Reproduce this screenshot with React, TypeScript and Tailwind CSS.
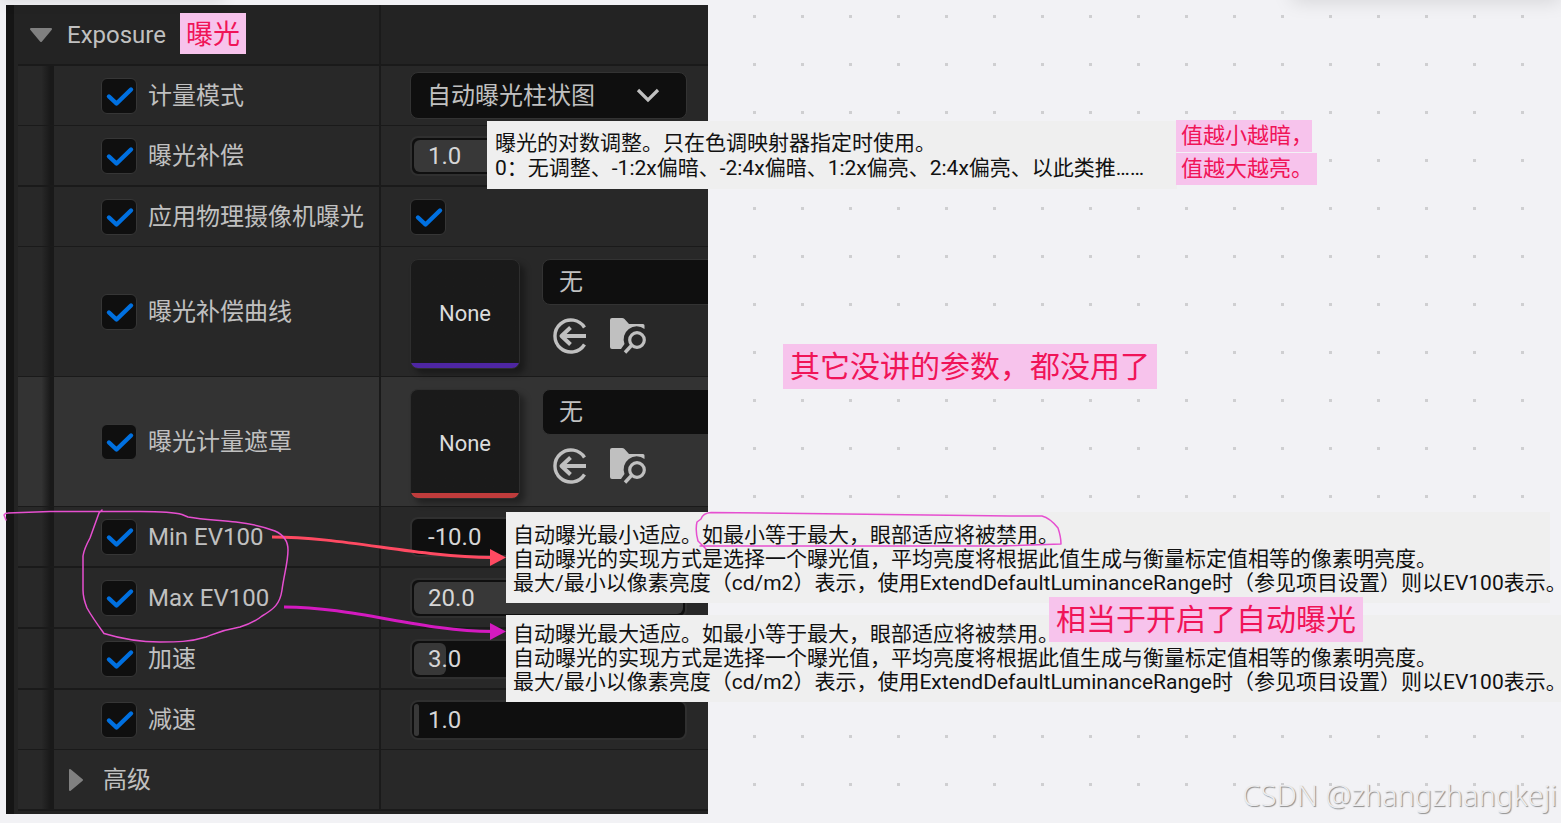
import React, { useState } from 'react';

type RowProps = {
  label: string;
  thin?: boolean;
  tall?: boolean;
  active?: boolean;
  children?: React.ReactNode;
};

function Check({ label }: { label: string }) {
  const [checked, setChecked] = useState<boolean>(true);

  return (
    <span className="relative block size-9 shrink-0">
      <input
        type="checkbox"
        aria-label={label}
        checked={checked}
        onChange={(e) => setChecked(e.target.checked)}
        className="block size-9 appearance-none rounded-md border border-[#363636] bg-[#0f0f0f]"
      />
      {checked && (
        <svg className="pointer-events-none absolute inset-0" width="36" height="36" fill="none">
          <path
            d="M8 18.5 15.5 25.5 30 11.5"
            stroke="#0070e0"
            strokeWidth="4.4"
            strokeLinecap="round"
            strokeLinejoin="round"
          />
        </svg>
      )}
    </span>
  );
}

function Gutter() {
  return (
    <div className="w-9 shrink-0 bg-linear-to-r from-transparent from-65% to-[#191919] to-90%" />
  );
}

function Row({ label, thin, tall, active, children }: RowProps) {
  return (
    <div
      className={`flex border-[#1a1a1a] ${thin || tall ? 'border-b' : 'border-b-2'} ${
        active ? 'bg-[#333333]' : 'bg-[#282828]'
      }`}
    >
      <Gutter />
      <div className="flex w-[327px] shrink-0 items-center gap-[11px] border-r-2 border-[#1a1a1a] pl-[47px]">
        <Check label={label} />
        <span className="whitespace-nowrap">{label}</span>
      </div>
      <div className={`flex flex-1 items-center pl-[29px] ${tall ? 'h-[129px] pt-1' : 'h-[59px]'}`}>
        {children}
      </div>
    </div>
  );
}

function NumberField({ label, start, fill }: { label: string; start: string; fill: number }) {
  const [value, setValue] = useState<string>(start);

  return (
    <div className="relative h-10 w-[277px] shrink-0 overflow-hidden rounded-lg border-2 border-[#303030] bg-[#0f0f0f]">
      <div className="absolute inset-y-0.5 left-0.5 right-0.5">
        <div className="h-full rounded-md bg-[#383838]" style={{ width: `${fill}%` }} />
      </div>
      <input
        aria-label={label}
        value={value}
        onChange={(e) => setValue(e.target.value)}
        className="relative block h-full w-full bg-transparent pl-4 text-[#d6d6d6] outline-none"
      />
    </div>
  );
}

function AssetPicker({ strip }: { strip: string }) {
  return (
    <div className="flex shrink-0 gap-[22px]">
      <button
        className={`h-[110px] w-[110px] rounded-lg border border-[#2e2e2e] bg-[#1a1a1a] bg-linear-to-t from-5% to-5% text-[22px] text-[#dcdcdc] shadow-[5px_5px_6px_rgba(0,0,0,0.35)] ${strip}`}
      >
        None
      </button>
      <div className="flex flex-col gap-[13px]">
        <button className="h-[46px] w-[277px] rounded-lg border border-[#333333] bg-[#0f0f0f] pl-4 text-left">
          无
        </button>
        <div className="flex gap-[22px] pl-[10px] text-[#c0c0c0]">
          <button aria-label="Use selected asset">
            <svg width="36" height="36" fill="none" stroke="currentColor">
              <path d="M32.5 9.5A16 16 0 1 0 32.5 26.5" strokeWidth="3.4" />
              <path d="M34 18H10" strokeWidth="4" />
              <path d="M18.5 9.5 9.5 18 18.5 26.5" strokeWidth="4" strokeLinejoin="round" />
            </svg>
          </button>
          <button aria-label="Browse to asset">
            <svg width="38" height="36">
              <path
                d="M2 0H12Q13.5 0 14.5 1L19 6H33Q34.5 6 34.5 7.5V11A13 13 0 0 0 14.5 26L11 31H2Q0 31 0 29V2Q0 0 2 0Z"
                fill="currentColor"
              />
              <circle cx="27" cy="22" r="7.3" fill="none" stroke="currentColor" strokeWidth="3.2" />
              <path d="M21.5 27.5 15 34.5" stroke="currentColor" strokeWidth="3.4" />
            </svg>
          </button>
        </div>
      </div>
    </div>
  );
}

function DetailsPanel() {
  return (
    <section className="ml-[6px] w-[45%] overflow-hidden border-l-8 border-[#151515] bg-[#232323] pb-[3px] pl-1 text-2xl text-[#c0c0c0]">
      <div className="flex border-b-2 border-[#1a1a1a]">
        <button className="flex h-[59px] w-[363px] shrink-0 items-center gap-[14px] border-r-2 border-[#1a1a1a] pl-[11px]">
          <svg width="24" height="16" fill="#808080" stroke="#808080" strokeLinejoin="round">
            <path d="M2 2H22L12 14Z" strokeWidth="2" />
          </svg>
          Exposure
        </button>
      </div>
      <Row label="计量模式" thin>
        <div className="relative shrink-0">
          <select
            aria-label="计量模式"
            className="block h-[47px] w-[277px] appearance-none rounded-lg border border-[#333333] bg-[#0f0f0f] pl-4"
          >
            <option>自动曝光柱状图</option>
          </select>
          <svg className="pointer-events-none absolute right-[27px] top-4" width="24" height="16" fill="none">
            <path d="M2 2 12 12 22 2" stroke="#c0c0c0" strokeWidth="3.2" />
          </svg>
        </div>
      </Row>
      <Row label="曝光补偿">
        <NumberField label="曝光补偿" start="1.0" fill={53} />
      </Row>
      <Row label="应用物理摄像机曝光" thin>
        <Check label="应用物理摄像机曝光" />
      </Row>
      <Row label="曝光补偿曲线" tall>
        <AssetPicker strip="from-[#4e26a2] to-[#1a1a1a]" />
      </Row>
      <Row label="曝光计量遮罩" tall active>
        <AssetPicker strip="from-[#bf3c3c] to-[#1a1a1a]" />
      </Row>
      <Row label="Min EV100">
        <NumberField label="Min EV100" start="-10.0" fill={0} />
      </Row>
      <Row label="Max EV100">
        <NumberField label="Max EV100" start="20.0" fill={100} />
      </Row>
      <Row label="加速">
        <NumberField label="加速" start="3.0" fill={12} />
      </Row>
      <Row label="减速" thin>
        <NumberField label="减速" start="1.0" fill={2} />
      </Row>
      <div className="flex border-b-2 border-[#1a1a1a] bg-[#282828]">
        <Gutter />
        <button className="flex h-[59px] w-[327px] shrink-0 items-center gap-[19px] border-r-2 border-[#1a1a1a] pl-[14px]">
          <svg width="16" height="24" fill="#808080" stroke="#808080" strokeLinejoin="round">
            <path d="M2 2V22L14 12Z" strokeWidth="2" />
          </svg>
          高级
        </button>
      </div>
    </section>
  );
}

function Tooltip({ className, lines }: { className: string; lines: string[] }) {
  return (
    <div className={`absolute whitespace-nowrap bg-[#efefef] text-[21px] text-[#111111] ${className}`}>
      {lines.map((line) => (
        <p key={line}>{line}</p>
      ))}
    </div>
  );
}

function Note({ className, children }: { className: string; children: React.ReactNode }) {
  return (
    <div className={`absolute whitespace-nowrap bg-[#f7c3ec] text-[#f01458] ${className}`}>
      {children}
    </div>
  );
}

function Ink() {
  return (
    <svg className="pointer-events-none absolute inset-0 h-full w-full" fill="none">
      <path d="M272 537C345 537 415 557 492 557.5" stroke="#ff4a62" strokeWidth="3" />
      <path d="M490 549 506 557.5 490 566Z" fill="#ff4a62" />
      <path d="M284 607C355 607 420 631 492 631.5" stroke="#d41ac0" strokeWidth="3" />
      <path d="M490 623 506 631.5 490 640Z" fill="#d41ac0" />
      <g stroke="#e64fd0" strokeWidth="1.5" strokeLinecap="round" strokeLinejoin="round">
        <path d="M6 520 4 515Q5 513 8 513L50 511.5H140Q172 511.5 182 514.5L188 517C205 520 222 520 236 522 252 524 265 527 275 531 284 535 288 541 288 550 288 562 284 575 282 590 280 604 274 609 262 616 256 621 250 624 240 627 222 630 214 634 206 637 190 642 176 642 160 642 140 642 122 639 104 633.5Q92 617 87 608 83 598 83 590V556Q84 549 90 538L99 513 102 510" />
        <path d="M706 549 698 541Q695 530 697 522L701 519Q703 513 711 512.5L1010 516H1042Q1050 518 1058 528 1061 537 1061 544L1000 546H700" />
      </g>
    </svg>
  );
}

export default function App() {
  return (
    <main className="relative min-h-screen overflow-hidden bg-[#f2f2f5] bg-[conic-gradient(from_270deg_at_3px_3px,#cfcfd1_90deg,transparent_0)] bg-size-[48px_48px] bg-position-[33px_15px] pt-[5px] font-['Roboto','Noto_Sans_CJK_SC',sans-serif]">
      <div className="absolute -top-4 left-0 h-4 w-56 shadow-[0_0_16px_rgba(0,0,0,0.12)]" />
      <div className="absolute -top-4 left-[1292px] right-0 h-4 shadow-[0_0_20px_rgba(0,0,0,0.15)]" />

      <DetailsPanel />

      <Tooltip
        className="left-[487px] top-[121px] w-[690px] pb-2 pl-2 pt-[10px] leading-[25px]"
        lines={[
          '曝光的对数调整。只在色调映射器指定时使用。',
          '0：无调整、-1:2x偏暗、-2:4x偏暗、1:2x偏亮、2:4x偏亮、以此类推……',
        ]}
      />
      <Tooltip
        className="left-[506px] top-[512px] w-[1044px] pb-2 pl-[7px] pt-[11px] leading-6"
        lines={[
          '自动曝光最小适应。如最小等于最大，眼部适应将被禁用。',
          '自动曝光的实现方式是选择一个曝光值，平均亮度将根据此值生成与衡量标定值相等的像素明亮度。',
          '最大/最小以像素亮度（cd/m2）表示，使用ExtendDefaultLuminanceRange时（参见项目设置）则以EV100表示。',
        ]}
      />
      <Tooltip
        className="left-[506px] right-0 top-[615px] pb-2 pl-[7px] pt-[7px] leading-6"
        lines={[
          '自动曝光最大适应。如最小等于最大，眼部适应将被禁用。',
          '自动曝光的实现方式是选择一个曝光值，平均亮度将根据此值生成与衡量标定值相等的像素明亮度。',
          '最大/最小以像素亮度（cd/m2）表示，使用ExtendDefaultLuminanceRange时（参见项目设置）则以EV100表示。',
        ]}
      />

      <Note className="left-[180px] top-[13px] px-[6px] pt-1 text-[27px] leading-[37px]">曝光</Note>
      <Note className="left-[1176px] top-[120px] w-[136px] pl-[5px] text-[22px] leading-8">
        值越小越暗，
      </Note>
      <Note className="left-[1176px] top-[153px] w-[141px] pl-[5px] text-[22px] leading-8">
        值越大越亮。
      </Note>
      <Note className="left-[783px] top-[344px] px-[7px] text-3xl leading-[45px]">
        其它没讲的参数，都没用了
      </Note>
      <Note className="left-[1049px] top-[597px] px-[7px] text-3xl leading-[45px]">
        相当于开启了自动曝光
      </Note>

      <Ink />

      <div className="absolute bottom-[8px] right-[4px] font-['Noto_Sans',sans-serif] text-[29px] font-light leading-10 text-[#ececee] [text-shadow:1px_1px_1px_#8c8c8c]">
        CSDN @zhangzhangkeji
      </div>
    </main>
  );
}
